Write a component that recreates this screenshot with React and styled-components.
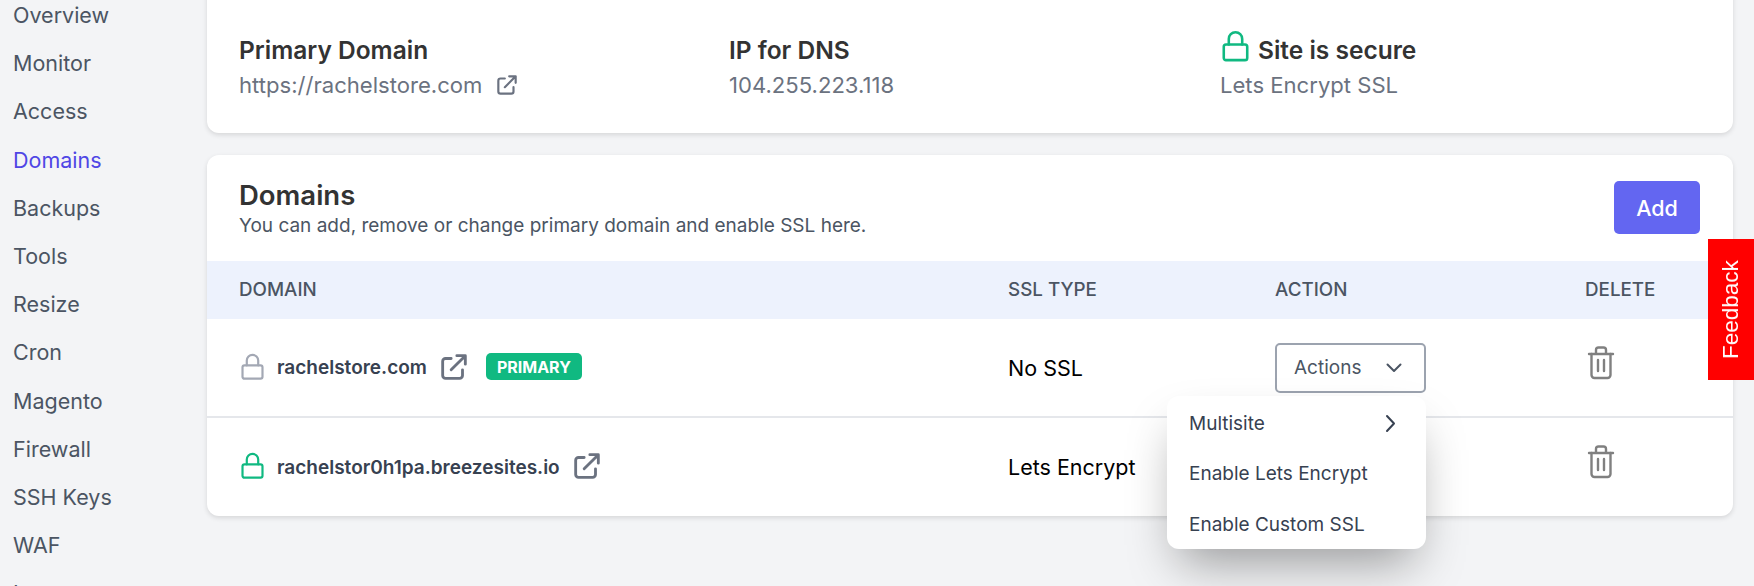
import React from "react";
import styled, { createGlobalStyle } from "styled-components";

const Global = createGlobalStyle`
  html, body { margin: 0; padding: 0; background: #f3f4f6; overflow: hidden; }
  body { font-family: Inter, "Liberation Sans", sans-serif; }
  * { box-sizing: border-box; }
`;

const Page = styled.div`
  display: flex;
  width: 1754px;
  height: 586px;
  overflow: hidden;
  background: #f3f4f6;
`;
const Sidebar = styled.nav`
  width: 207px;
  flex: none;
  display: flex;
  flex-direction: column;
  padding-left: 13px;
  margin-top: -9px;
`;
const NavItem = styled.a`
  height: 48.2px;
  flex: none;
  display: flex;
  align-items: center;
  font-size: 21.5px;
  line-height: 48px;
  color: ${(p) => (p.$active ? "#4f46e5" : "#4b5563")};
`;
const Main = styled.main`
  width: 1526px;
  flex: none;
  display: flex;
  flex-direction: column;
  gap: 22px;
  margin-top: -20px;
`;
const Card = styled.section`
  background: #fff;
  border-radius: 12px;
  box-shadow: 0 2px 5px rgba(0, 0, 0, 0.12);
`;
const Summary = styled(Card)`
  height: 153px;
  padding: 56px 32px 0;
  display: grid;
  grid-template-columns: 490px 491px 1fr;
`;
const InfoTitle = styled.div`
  display: flex;
  align-items: center;
  gap: 9px;
  height: 28px;
  font-size: 24.5px;
  font-weight: 600;
  color: #333;
`;
const InfoValue = styled.div`
  display: flex;
  align-items: center;
  gap: 12px;
  height: 30px;
  margin-top: 6px;
  font-size: 22.1px;
  color: #6b7280;
`;
const CardHead = styled.div`
  height: 106px;
  padding: 24px 32px 0;
  display: flex;
  justify-content: space-between;
  align-items: flex-start;
`;
const Title = styled.h2`
  margin: 0;
  font-size: 27.5px;
  line-height: 32px;
  font-weight: 600;
  color: #333;
`;
const Subtitle = styled.p`
  margin: 3px 0 0;
  font-size: 19px;
  line-height: 24px;
  color: #4b5563;
`;
const AddButton = styled.button`
  width: 86px;
  height: 53px;
  border: 0;
  border-radius: 5px;
  background: #6366f1;
  color: #fff;
  font: 500 21.5px Inter, sans-serif;
  margin: 2px 1px 0 0;
`;
const TableRow = styled.div`
  display: grid;
  grid-template-columns: 769px 267px 310px 1fr;
  align-items: center;
  padding-left: 32px;
`;
const HeadRow = styled(TableRow)`
  height: 58px;
  padding-bottom: 2px;
  background: #edf2fd;
  font-size: 18.8px;
  font-weight: 500;
  color: #4b5563;
`;
const BodyRow = styled(TableRow)`
  position: relative;
  height: ${(p) => (p.$last ? "98px" : "99px")};
  border-bottom: ${(p) => (p.$last ? "0" : "2px solid #e5e7eb")};
`;
const DomainCell = styled.div`
  display: flex;
  align-items: center;
  margin-top: -2px;
`;
const DomainName = styled.span`
  margin-left: 13px;
  font-size: 19px;
  font-weight: 600;
  color: #374151;
  position: relative;
  top: 1px;
`;
const LockSlot = styled.span`
  display: inline-flex;
  margin-left: 2px;
`;
const TitleLock = styled.span`
  display: inline-flex;
  margin-left: 2px;
  margin-top: -7px;
`;
const LinkGap = styled.span`
  display: inline-flex;
  margin-left: ${(p) => p.$gap}px;
`;
const Badge = styled.span`
  margin-left: 15px;
  height: 27px;
  padding: 0 11px;
  display: inline-flex;
  align-items: center;
  border-radius: 5px;
  background: #10b981;
  color: #fff;
  font-size: 16px;
  font-weight: 700;
`;
const SslCell = styled.div`
  font-size: 21.5px;
  color: #000;
`;
const ActionButton = styled.div`
  width: 151px;
  height: 50px;
  margin-top: 0;
  border: 2px solid #9ca3af;
  border-radius: 5px;
  padding: 0 20px 0 17px;
  display: flex;
  align-items: center;
  justify-content: space-between;
  font-size: 19px;
  color: #4b5563;
`;
const TrashCell = styled.div`
  display: flex;
  padding-left: 1px;
  margin-top: -10px;
`;
const Menu = styled.div`
  position: absolute;
  left: 960px;
  top: 77px;
  z-index: 5;
  width: 259px;
  height: 153px;
  padding: 2px 26px 0 22px;
  border-radius: 12px;
  background: #fff;
  box-shadow: 0 25px 50px -12px rgba(0, 0, 0, 0.38);
  display: flex;
  flex-direction: column;
`;
const MenuItem = styled.div`
  height: 50.5px;
  flex: none;
  display: flex;
  align-items: center;
  justify-content: space-between;
  font-size: 19px;
  font-weight: 400;
  color: #374151;
`;
const Feedback = styled.div`
  position: fixed;
  left: 1708px;
  top: 239px;
  width: 46px;
  height: 141px;
  background: #ff0000;
  color: #fff;
  display: flex;
  align-items: center;
  justify-content: center;
  writing-mode: vertical-rl;
  transform: rotate(180deg);
  font: 22.5px "Liberation Sans", Arial, sans-serif;
`;

const LinkIcon = ({ size, color = "#6b7280", width = 2 }) => (
  <svg width={size} height={size} viewBox="0 0 24 24" fill="none" stroke={color} strokeWidth={width} strokeLinecap="round" strokeLinejoin="round">
    <path d="M10 6H6a2 2 0 00-2 2v10a2 2 0 002 2h10a2 2 0 002-2v-4M14 4h6m0 0v6m0-6L10 14" />
  </svg>
);
const LockIcon = ({ size, color }) => (
  <svg width={size} height={size * 1.2} viewBox="0 0 24 29" fill="none" stroke={color} strokeWidth="2.3" strokeLinecap="round" strokeLinejoin="round" style={{ flex: "none" }}>
    <rect x="1.5" y="13" width="21" height="14" rx="2" />
    <path d="M6 13V8a6 6 0 0112 0v5" />
  </svg>
);
const TrashIcon = () => (
  <svg width="30" height="36" viewBox="0 0 30 36" fill="none" stroke="#808080" strokeWidth="2.4" strokeLinecap="round" strokeLinejoin="round">
    <path d="M3 9h24" />
    <path d="M10 8V5a2.5 2.5 0 012.5-2.5h5A2.5 2.5 0 0120 5v3" />
    <path d="M5.5 9v21a3 3 0 003 3h13a3 3 0 003-3V9" />
    <path d="M12 15v11M18 15v11" />
  </svg>
);
const ChevronDown = () => (
  <svg width="20" height="20" viewBox="0 0 20 20" fill="none" stroke="#4b5563" strokeWidth="2" strokeLinecap="round" strokeLinejoin="round">
    <path d="M3.5 6.5L10 13l6.5-6.5" />
  </svg>
);
const ChevronRight = () => (
  <svg width="20" height="20" viewBox="0 0 20 20" fill="none" stroke="#374151" strokeWidth="2" strokeLinecap="round" strokeLinejoin="round">
    <path d="M7 3L14 10.5 7 18" />
  </svg>
);

const nav = ["Overview", "Monitor", "Access", "Domains", "Backups", "Tools", "Resize", "Cron", "Magento", "Firewall", "SSH Keys", "WAF", "Logs"];

export default function App() {
  return (
    <Page>
      <Global />
      <Sidebar>
        {nav.map((n) => (
          <NavItem key={n} $active={n === "Domains"}>{n}</NavItem>
        ))}
      </Sidebar>
      <Main>
        <Summary>
          <div>
            <InfoTitle>Primary Domain</InfoTitle>
            <InfoValue>https://rachelstore.com <LinkIcon size={26} /></InfoValue>
          </div>
          <div>
            <InfoTitle>IP for DNS</InfoTitle>
            <InfoValue>104.255.223.118</InfoValue>
          </div>
          <div>
            <InfoTitle><TitleLock><LockIcon size={27} color="#10b981" /></TitleLock> Site is secure</InfoTitle>
            <InfoValue>Lets Encrypt SSL</InfoValue>
          </div>
        </Summary>
        <Card>
          <CardHead>
            <div>
              <Title>Domains</Title>
              <Subtitle>You can add, remove or change primary domain and enable SSL here.</Subtitle>
            </div>
            <AddButton>Add</AddButton>
          </CardHead>
          <HeadRow>
            <span>DOMAIN</span>
            <span>SSL TYPE</span>
            <span>ACTION</span>
            <span>DELETE</span>
          </HeadRow>
          <BodyRow>
            <DomainCell>
              <LockSlot><LockIcon size={23} color="#a3a8b4" /></LockSlot>
              <DomainName>rachelstore.com</DomainName>
              <LinkGap $gap={10}><LinkIcon size={34} /></LinkGap>
              <Badge>PRIMARY</Badge>
            </DomainCell>
            <SslCell>No SSL</SslCell>
            <div>
              <ActionButton>Actions <ChevronDown /></ActionButton>
            </div>
            <TrashCell><TrashIcon /></TrashCell>
            <Menu>
              <MenuItem>Multisite <ChevronRight /></MenuItem>
              <MenuItem>Enable Lets Encrypt</MenuItem>
              <MenuItem>Enable Custom SSL</MenuItem>
            </Menu>
          </BodyRow>
          <BodyRow $last>
            <DomainCell>
              <LockSlot><LockIcon size={23} color="#10b981" /></LockSlot>
              <DomainName>rachelstor0h1pa.breezesites.io</DomainName>
              <LinkGap $gap={10}><LinkIcon size={34} /></LinkGap>
            </DomainCell>
            <SslCell>Lets Encrypt</SslCell>
            <div />
            <TrashCell><TrashIcon /></TrashCell>
          </BodyRow>
        </Card>
      </Main>
      <Feedback>Feedback</Feedback>
    </Page>
  );
}
